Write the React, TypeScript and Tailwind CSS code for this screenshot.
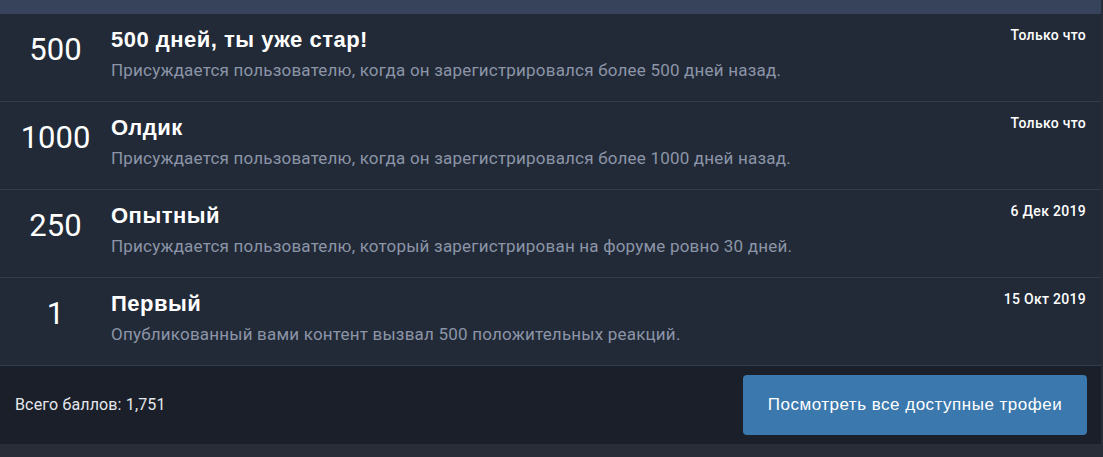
import React from "react";

const rows = [
  { n: "500", title: "500 дней, ты уже стар!", desc: "Присуждается пользователю, когда он зарегистрировался более 500 дней назад.", date: "Только что" },
  { n: "1000", title: "Олдик", desc: "Присуждается пользователю, когда он зарегистрировался более 1000 дней назад.", date: "Только что" },
  { n: "250", title: "Опытный", desc: "Присуждается пользователю, который зарегистрирован на форуме ровно 30 дней.", date: "6 Дек 2019" },
  { n: "1", title: "Первый", desc: "Опубликованный вами контент вызвал 500 положительных реакций.", date: "15 Окт 2019" },
];

export default function App() {
  return (
    <div className="w-[1103px] h-[457px] overflow-hidden bg-[#282d38]">
      <div className="w-[1101px] bg-[#222a37]">
        <div className="h-[14px] bg-[#36435a]" />
        {rows.map((r, i) => (
          <div key={i} className="h-[88px] flex items-start pt-[13px] pr-[15px] border-b border-[#333c4b]">
            <div className="w-[111px] shrink-0 text-center text-white text-[31px] leading-[36px] mt-[5px] font-['Roboto',sans-serif]">
              {r.n}
            </div>
            <div className="flex-1">
              <div className="text-white text-[22px] leading-[26px] tracking-[0.5px] font-bold font-['Liberation_Sans',Arial,sans-serif]">
                {r.title}
              </div>
              <div className="mt-[5px] text-[#8c95a8] text-[17px] leading-[24px] tracking-[0.2px] font-['Roboto',sans-serif]">
                {r.desc}
              </div>
            </div>
            <div className="text-white text-[14px] leading-[16px] tracking-[0.3px] font-medium font-['Roboto',sans-serif]">
              {r.date}
            </div>
          </div>
        ))}
        <div className="h-[78px] bg-[#1b1f29] flex items-center justify-between pl-[15px] pr-[14px]">
          <div className="text-[#e4e7ec] text-[16px] tracking-[0.15px] font-['Roboto',sans-serif]">Всего баллов: 1,751</div>
          <button className="h-[60px] w-[344px] rounded-[4px] bg-[#3a78ad] text-white text-[17px] tracking-[0.5px] font-['Liberation_Sans',Arial,sans-serif]">
            Посмотреть все доступные трофеи
          </button>
        </div>
      </div>
    </div>
  );
}
